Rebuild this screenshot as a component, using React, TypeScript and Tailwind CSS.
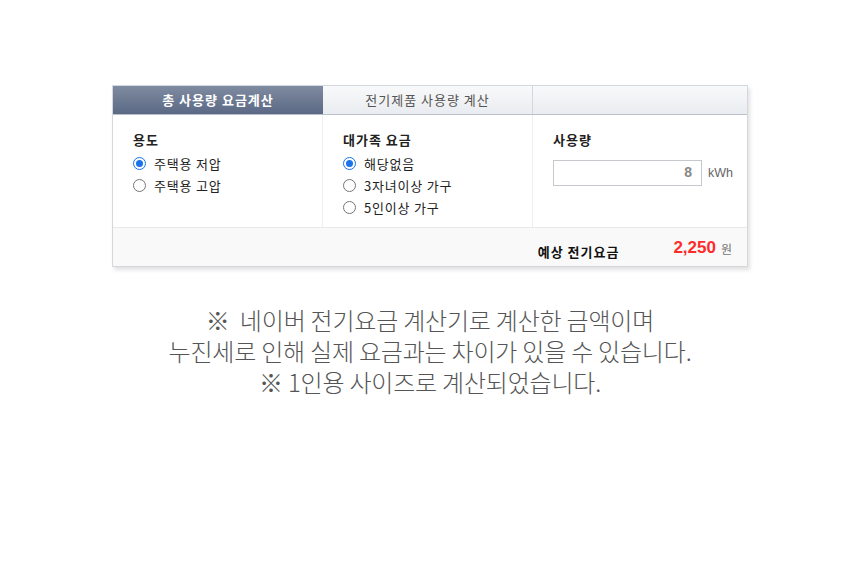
import { useState } from "react";

const font = "font-['Noto_Sans_CJK_KR','Noto_Sans',sans-serif]";

function Radio({ checked, label, onClick }: { checked: boolean; label: string; onClick: () => void }) {
  return (
    <label onClick={onClick} className="flex h-[22px] cursor-pointer items-center gap-[8px] text-[13px] tracking-[0.8px] text-[#222]">
      {checked ? (
        <span className="flex h-[13px] w-[13px] items-center justify-center rounded-full border-[1.5px] border-[#1a73e8]">
          <span className="h-[7px] w-[7px] rounded-full bg-[#1a73e8]" />
        </span>
      ) : (
        <span className="h-[13px] w-[13px] rounded-full border border-[#767676] bg-white" />
      )}
      <span>{label}</span>
    </label>
  );
}

export default function App() {
  const [tab, setTab] = useState(0);
  const [use, setUse] = useState("low");
  const [family, setFamily] = useState("none");

  return (
    <div className={`h-[577px] w-[860px] bg-white ${font}`}>
      <div className="pt-[85px] pl-[112px]">
        {/* calculator card */}
        <div className="w-[636px] border border-[#d4d7dc] shadow-[2px_3px_4px_rgba(0,0,0,0.12)]">
          <div className="flex h-[29px] border-b border-[#b9c0cb] text-[13px] tracking-[1px]">
            <button
              onClick={() => setTab(0)}
              className={`w-[210px] font-bold ${
                tab === 0
                  ? "bg-gradient-to-b from-[#7f8ba0] to-[#5b6985] text-white"
                  : "bg-gradient-to-b from-[#f8f9fa] to-[#e9ecf0] text-[#555]"
              }`}
            >
              총 사용량 요금계산
            </button>
            <button
              onClick={() => setTab(1)}
              className={`w-[210px] border-r border-[#d4d7dc] ${
                tab === 1
                  ? "bg-gradient-to-b from-[#7f8ba0] to-[#5b6985] font-bold text-white"
                  : "bg-gradient-to-b from-[#f8f9fa] to-[#e9ecf0] text-[#555]"
              }`}
            >
              전기제품 사용량 계산
            </button>
            <div className="flex-1 bg-gradient-to-b from-[#f8f9fa] to-[#e9ecf0]" />
          </div>

          <div className="flex h-[112px]">
            <div className="w-[210px] border-r border-[#eceef0] pt-[15px] pl-[20px]">
              <div className="mb-[3px] text-[13px] font-bold tracking-[1px] text-[#222]">용도</div>
              <Radio checked={use === "low"} label="주택용 저압" onClick={() => setUse("low")} />
              <Radio checked={use === "high"} label="주택용 고압" onClick={() => setUse("high")} />
            </div>
            <div className="w-[210px] border-r border-[#eceef0] pt-[15px] pl-[20px]">
              <div className="mb-[3px] text-[13px] font-bold tracking-[1px] text-[#222]">대가족 요금</div>
              <Radio checked={family === "none"} label="해당없음" onClick={() => setFamily("none")} />
              <Radio checked={family === "child"} label="3자녀이상 가구" onClick={() => setFamily("child")} />
              <Radio checked={family === "five"} label="5인이상 가구" onClick={() => setFamily("five")} />
            </div>
            <div className="flex-1 pt-[15px] pl-[20px]">
              <div className="mb-[10px] text-[13px] font-bold tracking-[1px] text-[#222]">사용량</div>
              <div className="flex items-center gap-[6px]">
                <div className="flex h-[26px] w-[149px] items-center justify-end border border-[#c5c8cc] pr-[9px] font-['Liberation_Sans',sans-serif] text-[14px] font-bold text-[#888]">
                  8
                </div>
                <span className="mt-[2px] font-['Liberation_Sans',sans-serif] text-[12.5px] text-[#666]">kWh</span>
              </div>
            </div>
          </div>

          <div className="flex h-[39px] items-center justify-end border-t border-[#e6e8ea] bg-[#f9f9f9] pr-[15px]">
            <span className="mr-[54px] pt-[10px] text-[13px] font-bold tracking-[1px] text-[#111]">예상 전기요금</span>
            <span className="mt-[2px] font-['Liberation_Sans',sans-serif] text-[17px] font-bold text-[#ff2b2b]">2,250</span>
            <span className="mt-[3px] ml-[5px] text-[12px] text-[#777]">원</span>
          </div>
        </div>
      </div>

      {/* notice below the calculator */}
      <div className="mt-[37px] text-center text-[24px] leading-[31px] font-light tracking-[-0.2px] text-[#555]">
        <p>※&nbsp; 네이버 전기요금 계산기로 계산한 금액이며</p>
        <p>누진세로 인해 실제 요금과는 차이가 있을 수 있습니다.</p>
        <p>※ 1인용 사이즈로 계산되었습니다.</p>
      </div>
    </div>
  );
}
